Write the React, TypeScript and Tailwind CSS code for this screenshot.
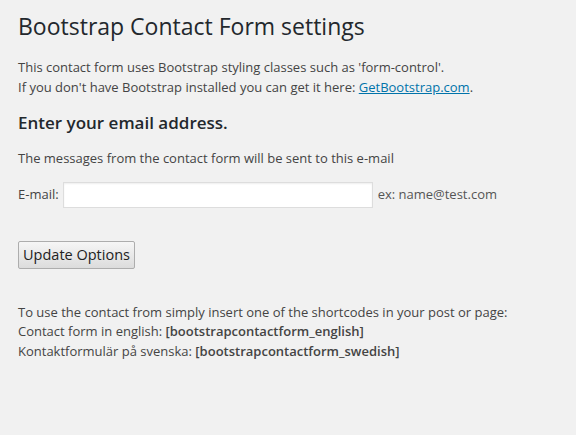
import React from 'react';

const App: React.FC = () => {
  return (
    <div
      className="min-h-[435px] w-full bg-[#f1f1f1] pl-[18px] pr-[18px] pt-[12px] text-[13px] leading-[19.5px] text-[#444]"
      style={{ fontFamily: '"Open Sans", "Liberation Sans", sans-serif' }}
    >
      <h2 className="text-[23px] leading-[29px] font-normal text-[#23282d]">
        Bootstrap Contact Form settings
      </h2>

      <p className="mt-[17px]">
        This contact form uses Bootstrap styling classes such as 'form-control'.
        <br />
        If you don't have Bootstrap installed you can get it here:{' '}
        <a href="#" className="text-[#0073aa] underline">
          GetBootstrap.com
        </a>
        .
      </p>

      <h3 className="mt-[14px] text-[17px] leading-[24px] font-semibold text-[#23282d]">
        Enter your email address.
      </h3>

      <p className="mt-[14px]">The messages from the contact form will be sent to this e-mail</p>

      <form className="mt-[13px]" onSubmit={(e) => e.preventDefault()}>
        <div className="flex items-center">
          <label htmlFor="email">E-mail:</label>
          <input
            id="email"
            type="text"
            className="ml-[4px] h-[26px] w-[310px] border border-[#ddd] bg-white px-[5px] text-[13px] text-[#32373c] shadow-[inset_0_1px_2px_rgba(0,0,0,0.07)] outline-none"
          />
          <span className="ml-[5px] text-[#555]">ex: name@test.com</span>
        </div>

        <button
          type="submit"
          className="mt-[33px] h-[28px] w-[117px] rounded-[2px] border border-[#adadad] bg-gradient-to-b from-[#f6f6f6] to-[#dcdcdc] text-[14.5px] leading-[26px] text-[#222]"
        >
          Update Options
        </button>
      </form>

      <p className="mt-[34px]">
        To use the contact from simply insert one of the shortcodes in your post or page:
        <br />
        Contact form in english: <strong className="font-semibold">[bootstrapcontactform_english]</strong>
        <br />
        Kontaktformulär på svenska: <strong className="font-semibold">[bootstrapcontactform_swedish]</strong>
      </p>
    </div>
  );
};

export default App;
